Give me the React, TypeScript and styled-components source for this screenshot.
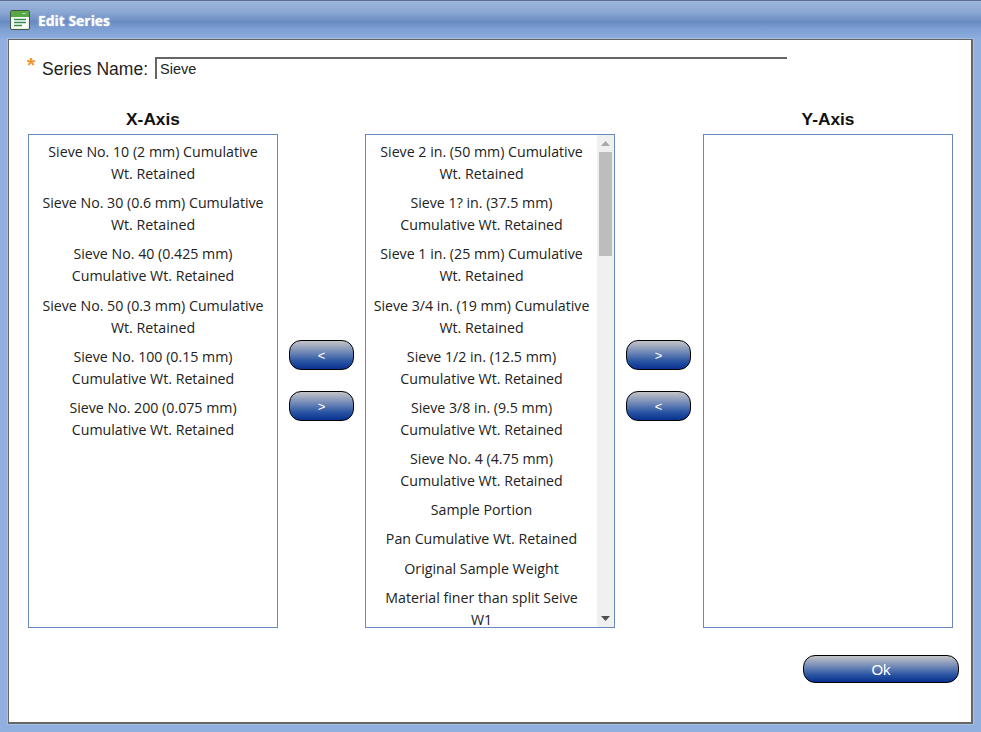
import React from "react";
import styled, { createGlobalStyle } from "styled-components";

const Global = createGlobalStyle`
  html, body { margin: 0; padding: 0; background: #92b0df; }
  body { font-family: "Liberation Sans", Arial, sans-serif; }
`;

const Window = styled.div`
  width: 981px;
  height: 732px;
  box-sizing: border-box;
  display: flex;
  flex-direction: column;
  background: #92b0df;
  overflow: hidden;
`;

const TitleBar = styled.div`
  height: 39px;
  flex: none;
  box-sizing: border-box;
  display: flex;
  align-items: center;
  gap: 8px;
  padding: 1px 0 0 10px;
  border-top: 1px solid #5f6b94;
  background: linear-gradient(180deg, #9db7dc 0%, #8aa6d2 30%, #6a8bc2 54%, #7c9dd2 72%, #8fafe0 100%);
`;

const TitleGraphic = styled.svg`
  flex: none;
  margin-bottom: 2px;
`;

const TitleText = styled.span`
  font-family: "Open Sans", sans-serif;
  font-size: 14px;
  font-weight: 700;
  letter-spacing: -0.05px;
  color: #fff;
  text-shadow: 0 0 2px rgba(255, 255, 255, 0.7);
`;

const Body = styled.div`
  width: 965px;
  height: 685px;
  margin-left: 8px;
  box-sizing: border-box;
  background: #fff;
  border: 1px solid #666;
  border-width: 1px 2px 2px 1px;
  box-shadow: 0 0 0 1px #a7bfe5;
  padding: 0 12px 0 18px;
  display: flex;
  flex-direction: column;
`;

const NameRow = styled.div`
  display: flex;
  align-items: flex-start;
  height: 38px;
  margin-top: 17px;
`;

const Star = styled.span`
  color: #f7931e;
  font-size: 21px;
  font-weight: 700;
  line-height: 16px;
  width: 15px;
  flex: none;
`;

const Label = styled.label`
  font-family: "Liberation Sans", sans-serif;
  font-size: 17.5px;
  line-height: 24px;
  color: #222;
  margin-right: 7px;
  flex: none;
`;

const NameInput = styled.input`
  box-sizing: border-box;
  width: 632px;
  height: 22px;
  padding: 0 0 0 3px;
  margin: 0;
  border: none;
  border-top: 2px solid #666;
  border-left: 2px solid #666;
  outline: none;
  background: #fff;
  font-family: "Liberation Sans", sans-serif;
  font-size: 14.5px;
  color: #222;
`;

const Columns = styled.div`
  display: grid;
  grid-template-columns: 250px 87px 250px 88px 250px;
  grid-template-rows: 20px 494px;
  row-gap: 5px;
  margin-top: 14px;
  margin-left: 1px;
`;

const AxisTitle = styled.div<{ $col: number }>`
  grid-column: ${(p) => p.$col};
  grid-row: 1;
  text-align: center;
  font-size: 17.3px;
  font-weight: 700;
  line-height: 20px;
  color: #111;
`;

const ListBox = styled.div<{ $col: number }>`
  grid-column: ${(p) => p.$col};
  grid-row: 2;
  box-sizing: border-box;
  border: 1px solid #6888c0;
  display: flex;
  overflow: hidden;
  background: #fff;
`;

const Items = styled.div`
  flex: 1;
  min-width: 0;
  padding: 6px 7.2px 0;
  overflow: hidden;
`;

const Item = styled.div`
  font-family: "Open Sans", sans-serif;
  font-size: 14.2px;
  line-height: 22.1px;
  color: #222;
  text-align: center;
  margin-bottom: 7px;
`;

const Track = styled.div`
  width: 17px;
  flex: none;
  background: #f0f0f0;
  display: flex;
  flex-direction: column;
  align-items: center;
`;

const ArrowSlot = styled.div`
  height: 17px;
  flex: none;
  display: flex;
  align-items: center;
  justify-content: center;
`;

const Thumb = styled.div`
  width: 13px;
  height: 104px;
  flex: none;
  background: #bdbdbd;
`;

const Spacer = styled.div`
  flex: 1;
`;

const ButtonGroup = styled.div<{ $col: number; $pad: number }>`
  grid-column: ${(p) => p.$col};
  grid-row: 2;
  display: flex;
  flex-direction: column;
  gap: 21px;
  padding: 206px 0 0 ${(p) => p.$pad}px;
`;

const PillButton = styled.button<{ $w: number; $h: number; $size: number }>`
  width: ${(p) => p.$w}px;
  height: ${(p) => p.$h}px;
  padding: 0;
  border: 1px solid #000;
  border-radius: 12px;
  background: linear-gradient(180deg, #c4c4c6 0%, #6d86b6 42%, #2a55a3 72%, #07318f 100%);
  color: #fff;
  font-family: "Liberation Sans", sans-serif;
  font-size: ${(p) => p.$size}px;
  line-height: 1;
`;

const Footer = styled.div`
  display: flex;
  justify-content: flex-end;
  margin-top: 27px;
`;

const left = [
  "Sieve No. 10 (2 mm) Cumulative Wt. Retained",
  "Sieve No. 30 (0.6 mm) Cumulative Wt. Retained",
  "Sieve No. 40 (0.425 mm) Cumulative Wt. Retained",
  "Sieve No. 50 (0.3 mm) Cumulative Wt. Retained",
  "Sieve No. 100 (0.15 mm) Cumulative Wt. Retained",
  "Sieve No. 200 (0.075 mm) Cumulative Wt. Retained",
];

const middle = [
  "Sieve 2 in. (50 mm) Cumulative Wt. Retained",
  "Sieve 1? in. (37.5 mm) Cumulative Wt. Retained",
  "Sieve 1 in. (25 mm) Cumulative Wt. Retained",
  "Sieve 3/4 in. (19 mm) Cumulative Wt. Retained",
  "Sieve 1/2 in. (12.5 mm) Cumulative Wt. Retained",
  "Sieve 3/8 in. (9.5 mm) Cumulative Wt. Retained",
  "Sieve No. 4 (4.75 mm) Cumulative Wt. Retained",
  "Sample Portion",
  "Pan Cumulative Wt. Retained",
  "Original Sample Weight",
  "Material finer than split Seive W1",
];

const TitleIcon = () => (
  <TitleGraphic width="20" height="20" viewBox="0 0 20 20">
    <rect x="0.5" y="0.5" width="19" height="19" rx="1.5" fill="#eef4e6" stroke="#3d5a42" />
    <path d="M1 2a1 1 0 0 1 1-1h16a1 1 0 0 1 1 1v5H1z" fill="#58a848" />
    <path d="M12 3.5h4" stroke="#a9d898" strokeWidth="1" />
    <rect x="3" y="7.5" width="14" height="10" fill="#fff" />
    <path d="M4 9.5h12M4 12.5h12M4 15.5h8" stroke="#2f8a4c" strokeWidth="1.3" />
  </TitleGraphic>
);

const Up = () => (
  <svg width="9" height="5" viewBox="0 0 9 5">
    <path d="M4.5 0L9 5H0z" fill="#a8a8a8" />
  </svg>
);

const Down = () => (
  <svg width="9" height="5" viewBox="0 0 9 5">
    <path d="M0 0h9L4.5 5z" fill="#505050" />
  </svg>
);

export default function App() {
  return (
    <Window>
      <Global />
      <TitleBar>
        <TitleIcon />
        <TitleText>Edit Series</TitleText>
      </TitleBar>
      <Body>
        <NameRow>
          <Star>*</Star>
          <Label>Series Name:</Label>
          <NameInput defaultValue="Sieve" />
        </NameRow>
        <Columns>
          <AxisTitle $col={1}>X-Axis</AxisTitle>
          <AxisTitle $col={5}>Y-Axis</AxisTitle>
          <ListBox $col={1}>
            <Items>
              {left.map((t) => (
                <Item key={t}>{t}</Item>
              ))}
            </Items>
          </ListBox>
          <ButtonGroup $col={2} $pad={11}>
            <PillButton $w={65} $h={30} $size={13}>&lt;</PillButton>
            <PillButton $w={65} $h={30} $size={13}>&gt;</PillButton>
          </ButtonGroup>
          <ListBox $col={3}>
            <Items>
              {middle.map((t) => (
                <Item key={t}>{t}</Item>
              ))}
            </Items>
            <Track>
              <ArrowSlot><Up /></ArrowSlot>
              <Thumb />
              <Spacer />
              <ArrowSlot><Down /></ArrowSlot>
            </Track>
          </ListBox>
          <ButtonGroup $col={4} $pad={11}>
            <PillButton $w={65} $h={30} $size={13}>&gt;</PillButton>
            <PillButton $w={65} $h={30} $size={13}>&lt;</PillButton>
          </ButtonGroup>
          <ListBox $col={5} />
        </Columns>
        <Footer>
          <PillButton $w={156} $h={28} $size={15}>Ok</PillButton>
        </Footer>
      </Body>
    </Window>
  );
}
